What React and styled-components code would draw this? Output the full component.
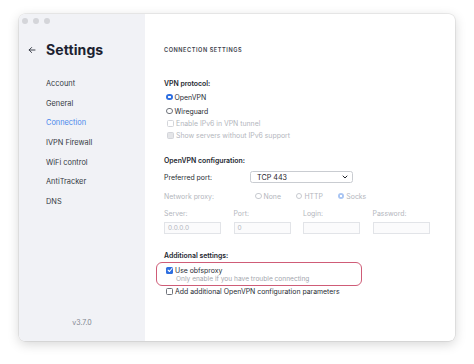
import React from "react";
import styled, { createGlobalStyle } from "styled-components";

const Global = createGlobalStyle`
  html, body { margin: 0; padding: 0; background: #ffffff; }
  body { font-family: Inter, "Noto Sans", "Liberation Sans", sans-serif; -webkit-font-smoothing: antialiased; }
  * { box-sizing: border-box; }
`;

const Page = styled.div`
  width: 474px;
  height: 364px;
  padding: 14px 0 0 19px;
`;

const Window = styled.div`
  width: 436px;
  height: 327px;
  display: flex;
  border-radius: 6px;
  overflow: hidden;
  background: #ffffff;
  box-shadow: 0 3px 12px rgba(0, 0, 0, 0.17), 0 0 0 0.5px rgba(0, 0, 0, 0.12);
`;

const Sidebar = styled.aside`
  width: 126px;
  flex: none;
  background: #f1f2f6;
  display: flex;
  flex-direction: column;
`;

const Lights = styled.div`
  display: flex;
  gap: 5px;
  padding: 4px 0 0 3px;
  height: 14px;
`;

const Light = styled.span`
  width: 6px;
  height: 6px;
  border-radius: 50%;
  background: #d4d5d9;
`;

const TitleRow = styled.div`
  display: flex;
  align-items: center;
  gap: 10px;
  height: 20px;
  margin-top: 12px;
  padding-left: 9px;
`;

const Title = styled.h1`
  margin: 0;
  font-size: 14px;
  font-weight: 700;
  color: #1c2230;
  line-height: 20px;
  letter-spacing: 0.1px;
`;

const Nav = styled.nav`
  display: flex;
  flex-direction: column;
  margin-top: 14px;
  padding-left: 27px;
`;

const NavItem = styled.div`
  height: 19.7px;
  line-height: 19.7px;
  font-size: 7.4px;
  color: ${(p) => (p.$active ? "#4a88ec" : "#353a44")};
`;

const Version = styled.div`
  margin-top: auto;
  padding-bottom: 12px;
  text-align: center;
  font-size: 7px;
  line-height: 12px;
  color: #80858f;
`;

const Content = styled.main`
  flex: 1;
  padding-left: 19px;
  display: flex;
  flex-direction: column;
`;

const Row = styled.div`
  display: flex;
  align-items: center;
  height: ${(p) => p.$h || 12}px;
  margin-top: ${(p) => p.$mt || 0}px;
  padding-left: ${(p) => p.$pl || 0}px;
  font-size: 6.9px;
  color: ${(p) => (p.$disabled ? "#b3b6bd" : "#272b33")};
`;

const Heading = styled(Row)`
  font-size: 5.6px;
  font-weight: 600;
  letter-spacing: 0.55px;
  color: #3d424c;
`;

const Label = styled(Row)`
  font-weight: 600;
  color: #23272f;
`;

const Radio = styled.span`
  width: 6.5px;
  height: 6.5px;
  border-radius: 50%;
  flex: none;
  margin-right: 2px;
  border: ${(p) => (p.$on ? "none" : `0.8px solid ${p.$disabled ? "#c7cad0" : "#6f737b"}`)};
  background: ${(p) =>
    p.$on
      ? `radial-gradient(circle, #ffffff 0 1.1px, ${p.$disabled ? "#a9c5f3" : "#2f6fe0"} 1.3px)`
      : "#ffffff"};
`;

const Check = styled.span`
  width: 7px;
  height: 7px;
  border-radius: 1.5px;
  flex: none;
  margin-right: 2px;
  display: flex;
  align-items: center;
  justify-content: center;
  border: ${(p) => (p.$on ? "none" : `0.8px solid ${p.$disabled ? "#d3d5da" : "#6f737b"}`)};
  background: ${(p) => (p.$on ? "#2f6fe0" : p.$disabled && p.$grey ? "#e4e5e8" : "#ffffff")};
`;

const FieldLabel = styled.span`
  width: 86px;
  flex: none;
`;

const Select = styled.div`
  width: 103px;
  height: 12px;
  border: 0.8px solid #c9ccd1;
  border-radius: 2.5px;
  display: flex;
  align-items: center;
  justify-content: space-between;
  padding: 0 4px 0 6px;
  font-size: 7.2px;
  color: #1f232a;
  background: #ffffff;
`;

const Options = styled.div`
  display: flex;
  align-items: center;
  gap: 15px;
  padding-left: 5px;
`;

const Option = styled.span`
  display: flex;
  align-items: center;
`;

const Fields = styled.div`
  display: grid;
  grid-template-columns: repeat(4, 57px);
  column-gap: 12.5px;
  margin-top: 5px;
`;

const Field = styled.div`
  display: flex;
  flex-direction: column;
  gap: 2px;
  font-size: 6.9px;
  color: #b3b6bd;
`;

const FieldCaption = styled.span`
  height: 12px;
  line-height: 12px;
`;

const Input = styled.div`
  height: 12px;
  border: 0.8px solid #e2e4e8;
  background: #fbfbfc;
  padding-left: 3px;
  line-height: 10.5px;
  font-size: 6.5px;
  color: #b3b6bd;
`;

const Highlight = styled.div`
  margin: 1px 0 0 -8px;
  width: 206px;
  height: 24px;
  border: 1px solid #cf5c77;
  border-radius: 6px;
  padding: 1px 0 0 9px;
`;

const Hint = styled.div`
  height: 10px;
  margin-top: -2px;
  line-height: 10px;
  padding-left: 10px;
  font-size: 6.6px;
  color: #a3a6ad;
`;

const Tick = () => (
  <svg width="6" height="6" viewBox="0 0 6 6">
    <path d="M1.1 3.1 L2.5 4.5 L4.9 1.5" fill="none" stroke="#fff" strokeWidth="1.1" strokeLinecap="round" strokeLinejoin="round" />
  </svg>
);

const Arrow = () => (
  <svg width="8" height="8" viewBox="0 0 8 8">
    <path d="M7 4 H1.2 M3.6 1.5 L1.1 4 L3.6 6.5" fill="none" stroke="#2a2f3a" strokeWidth="0.9" strokeLinecap="round" strokeLinejoin="round" />
  </svg>
);

const Chevron = () => (
  <svg width="6" height="4" viewBox="0 0 6 4">
    <path d="M1 1 L3 3 L5 1" fill="none" stroke="#1f232a" strokeWidth="1" strokeLinecap="round" strokeLinejoin="round" />
  </svg>
);

const navItems = ["Account", "General", "Connection", "IVPN Firewall", "WiFi control", "AntiTracker", "DNS"];

const fields = [
  { label: "Server:", value: "0.0.0.0" },
  { label: "Port:", value: "0" },
  { label: "Login:", value: "" },
  { label: "Password:", value: "" },
];

export default function App() {
  return (
    <Page>
      <Global />
      <Window>
        <Sidebar>
          <Lights>
            <Light />
            <Light />
            <Light />
          </Lights>
          <TitleRow>
            <Arrow />
            <Title>Settings</Title>
          </TitleRow>
          <Nav>
            {navItems.map((n) => (
              <NavItem key={n} $active={n === "Connection"}>
                {n}
              </NavItem>
            ))}
          </Nav>
          <Version>v3.7.0</Version>
        </Sidebar>
        <Content>
          <Heading $mt={30}>CONNECTION SETTINGS</Heading>

          <Label $mt={21}>VPN protocol:</Label>
          <Row $mt={1} $h={14} $pl={2}>
            <Radio $on />
            OpenVPN
          </Row>
          <Row $h={14} $pl={2}>
            <Radio />
            Wireguard
          </Row>
          <Row $mt={-1} $pl={3} $disabled>
            <Check $disabled />
            Enable IPv6 in VPN tunnel
          </Row>
          <Row $pl={3} $disabled>
            <Check $disabled $grey />
            Show servers without IPv6 support
          </Row>

          <Label $mt={13}>OpenVPN configuration:</Label>
          <Row $mt={4} $h={14}>
            <FieldLabel>Preferred port:</FieldLabel>
            <Select>
              TCP 443
              <Chevron />
            </Select>
          </Row>
          <Row $mt={5} $h={14} $disabled>
            <FieldLabel>Network proxy:</FieldLabel>
            <Options>
              <Option>
                <Radio $disabled />
                None
              </Option>
              <Option>
                <Radio $disabled />
                HTTP
              </Option>
              <Option>
                <Radio $on $disabled />
                Socks
              </Option>
            </Options>
          </Row>
          <Fields>
            {fields.map((f) => (
              <Field key={f.label}>
                <FieldCaption>{f.label}</FieldCaption>
                <Input>{f.value}</Input>
              </Field>
            ))}
          </Fields>

          <Label $mt={15}>Additional settings:</Label>
          <Highlight>
            <Row>
              <Check $on>
                <Tick />
              </Check>
              Use obfsproxy
            </Row>
            <Hint>Only enable if you have trouble connecting</Hint>
          </Highlight>
          <Row $mt={-1} $pl={2}>
            <Check />
            Add additional OpenVPN configuration parameters
          </Row>
        </Content>
      </Window>
    </Page>
  );
}
